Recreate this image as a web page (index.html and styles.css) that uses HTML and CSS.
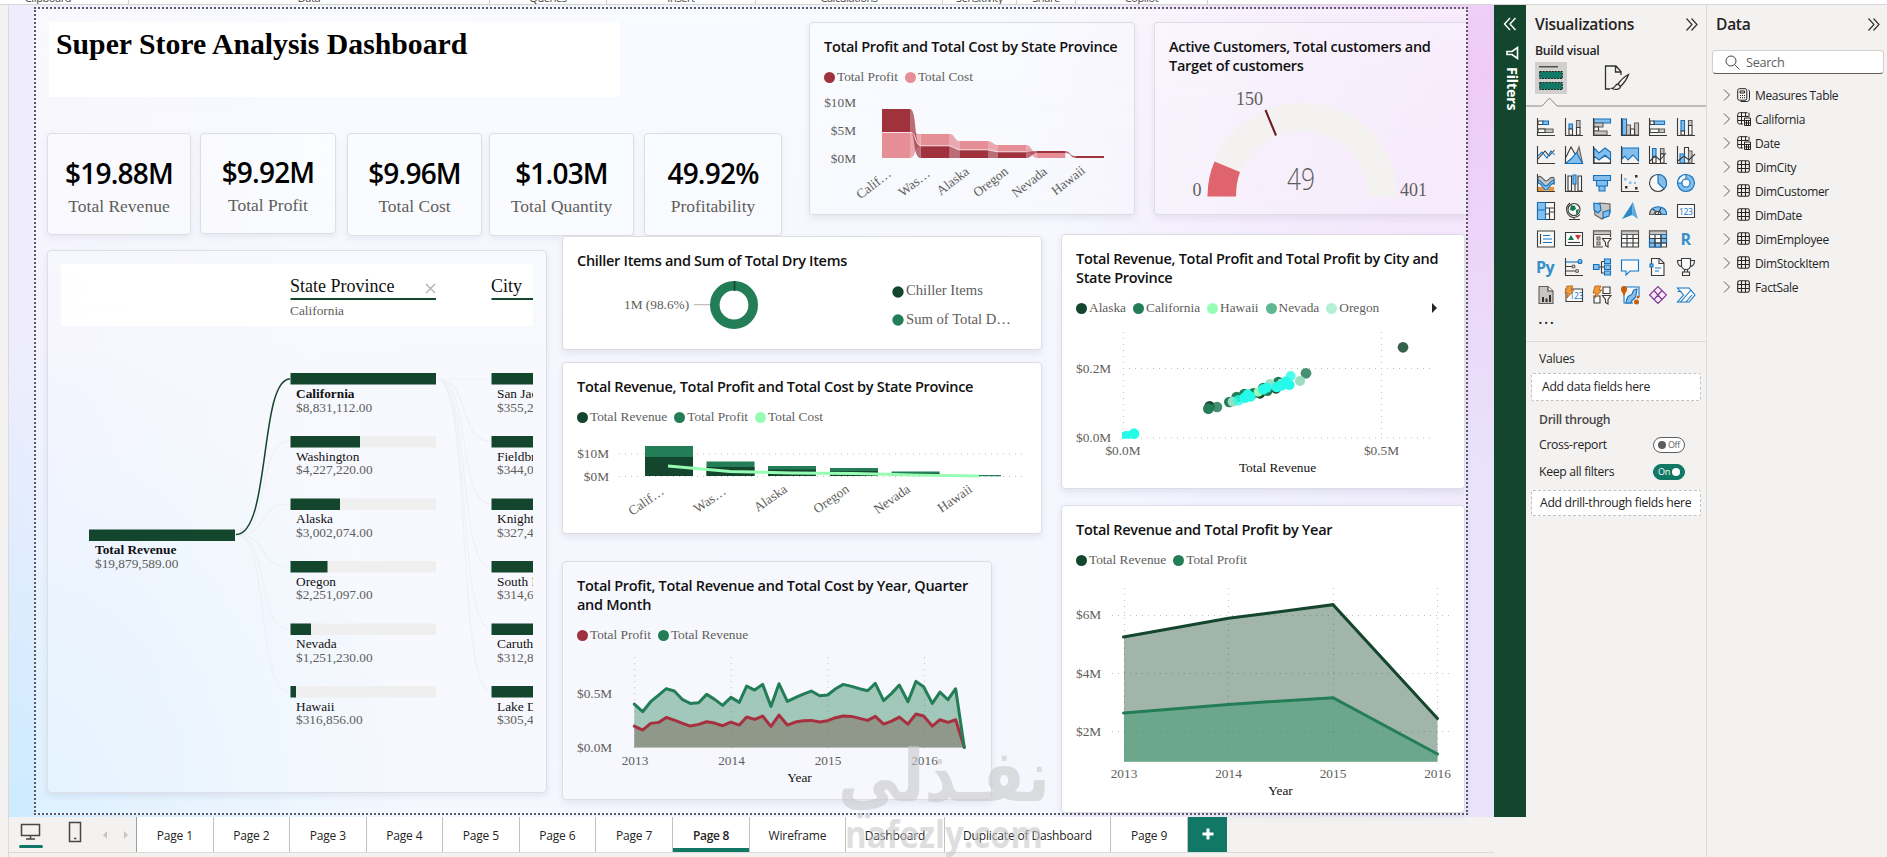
FILE: index.html
```html
<!DOCTYPE html>
<html lang="en">
<head>
    <meta charset="UTF-8">
    <meta name="viewport" content="width=device-width, initial-scale=1.0">
    <title>Super Store Analysis Dashboard</title>
    <link rel="stylesheet" href="styles.css">
</head>
<body>
    <div class="ribbon">
        <span class="g1">Clipboard</span><span class="g2">Data</span><span class="g3">Queries</span><span class="g4">Insert</span><span class="g5">Calculations</span><span class="g6">Sensitivity</span><span class="g7">Share</span><span class="g8">Copilot</span>
    </div>

    <div class="workspace">
        <div class="rail"></div>

        <main class="editor">
            <div class="report">
                <div class="canvas">
                    <div class="top-row">
                        <div class="intro">
                            <h1>Super Store Analysis Dashboard</h1>
                            <div class="kpi-row">
                                <div class="kpi k1"><b>$19.88M</b><span>Total Revenue</span></div>
                                <div class="kpi k2"><b>$9.92M</b><span>Total Profit</span></div>
                                <div class="kpi k3"><b>$9.96M</b><span>Total Cost</span></div>
                                <div class="kpi k4"><b>$1.03M</b><span>Total Quantity</span></div>
                                <div class="kpi k5"><b>49.92%</b><span>Profitability</span></div>
                            </div>
                        </div>

                        <section class="card ribbon-card">
                            <h2>Total Profit and Total Cost by State Province</h2>
                            <div class="legend"><span class="crimson">Total Profit</span><span class="pink">Total Cost</span></div>
                            <svg width="296" height="129" viewBox="824 85 296 129">
                                <g class="axis end">
                                    <text x="856" y="107">$10M</text><text x="856" y="135">$5M</text><text x="856" y="163">$0M</text>
                                </g>
                                <g fill="#e58e96">
                                    <path d="M882 132h28v26h-28zM920.7 134h29v12h-29zM959.4 141h28.6v9h-28.6zM998 145h28.5v7H998zM1036.8 153h28.5v5h-28.5z"/>
                                    <path opacity=".75" d="M910 132c6 0 5 2 10.7 2v12c-6 0-5 12-10.7 12zM949.7 134c5 0 5 7 9.7 7v9c-5 0-5-4-9.7-4zM988 141c5 0 5 4 10 4v7c-5 0-5-2-10-2zM1026.5 145c5 0 5 8 10.3 8v5c-5 0-5-6-10.3-6z"/>
                                </g>
                                <g fill="#a0323e">
                                    <path d="M882 109h28v23h-28zM920.7 146h29v12h-29zM959.4 150h28.6v8h-28.6zM998 152h28.5v6H998zM1036.8 151h28.5v2h-28.5zM1075.5 156h28.5v2h-28.5z"/>
                                    <path opacity=".7" d="M910 109c7 0 4 37 10.7 37v12c-8 0-5-26-10.7-26zM949.7 146c5 0 5 4 9.7 4v8h-9.7zM988 150c5 0 5 2 10 2v6h-10zM1026.5 152c4 0 5-1 10.3-1v2c-5 0-5 5-10.3 5zM1065.3 151c5 0 4 5 10.2 5v2c-5 0-4-5-10.2-5z"/>
                                </g>
                                <path d="M882 132.5h29c5 0 4 13.3 10 13.3h29l9 4h29l10 2h28" fill="none" stroke="#f6dde3"/>
                                <g class="axis end">
                                    <text transform="translate(892 175) rotate(-38)">Calif…</text>
                                    <text transform="translate(931 175) rotate(-38)">Was…</text>
                                    <text transform="translate(970 173) rotate(-38)">Alaska</text>
                                    <text transform="translate(1009 173) rotate(-38)">Oregon</text>
                                    <text transform="translate(1048 173) rotate(-38)">Nevada</text>
                                    <text transform="translate(1086 172) rotate(-38)">Hawaii</text>
                                </g>
                            </svg>
                        </section>

                        <section class="card gauge-card">
                            <h2>Active Customers, Total customers and<br>Target of customers</h2>
                            <svg width="282" height="140" viewBox="1169 74 282 140">
                                <path d="M1207.5 196.5a95 94 0 0 1 190 0h-30a65 65 0 0 0-131 0z" fill="#f3f2f0"/>
                                <path d="M1207.5 196.5q0-19 7-35l25.5 10.5q-4 11-4 24.5z" fill="#e0646e"/>
                                <path d="M1265.5 110l10.500 25.500" stroke="#6b1823" stroke-width="2"/>
                                <g class="gauge-num">
                                    <text x="1236" y="105">150</text><text x="1192.500" y="196">0</text><text x="1400" y="196">401</text>
                                </g>
                                <text class="gauge-value" x="1287" y="190" textLength="28" lengthAdjust="spacingAndGlyphs">49</text>
                            </svg>
                        </section>
                    </div>

                    <div class="bottom-row">
                        <section class="tree">
                            <svg width="498" height="541" viewBox="48 251 498 541">
                                <rect x="61" y="264" width="472" height="62" fill="#fff" opacity=".9"/>
                                <g class="tree-head">
                                    <text x="290" y="292">State Province</text><text x="491" y="292">City</text>
                                </g>
                                <path d="M290.500 299h145.500M491.500 299H533" stroke="#13462d" stroke-width="2"/>
                                <path d="M426 284l9 9m0-9l-9 9" stroke="#b3b0ad" stroke-width="1.300"/>
                                <text class="axis" x="290" y="315">California</text>

                                <g fill="none" stroke="#edf1f6" stroke-width="1.200">
                                    <path d="M236 535c35 0 19-94 54-94M236 535c35 0 19-31 54-31M236 535c35 0 19 32 54 32M236 535c35 0 19 94 54 94M236 535c35 0 19 157 54 157"/>
                                    <path d="M437 379h54M437 379c35 0 19 62 54 62M437 379c35 0 19 125 54 125M437 379c35 0 19 188 54 188M437 379c35 0 19 250 54 250M437 379c35 0 19 313 54 313"/>
                                </g>
                                <path d="M236 534.500c35 0 23-155.500 54-155.500" fill="none" stroke="#13462d" stroke-width="1.500"/>

                                <path d="M290.500 436h145.500v11.500H290.500zM290.500 498.500h145.500V510H290.500zM290.500 561h145.500v11.500H290.500zM290.500 623.500h145.500V635H290.500zM290.500 686h145.500v11.500H290.500z" fill="#efeff0"/>
                                <g fill="#13462d">
                                    <path d="M89 529.500h146V541H89z"/>
                                    <path d="M290.500 373h145.500v11.500H290.500zM290.500 436h69.500v11.500H290.500zM290.500 498.500h49.500V510H290.500zM290.500 561h37v11.500h-37zM290.500 623.500h20.500V635h-20.500zM290.500 686h5.500v11.500h-5.500z"/>
                                    <path d="M491.500 373H533v11.500h-41.500zM491.500 436H533v11.500h-41.500zM491.500 498.500H533V510h-41.500zM491.500 561H533v11.500h-41.500zM491.500 623.500H533V635h-41.500zM491.500 686H533v11.500h-41.500z"/>
                                </g>
                                <g class="node">
                                    <text x="95" y="554" class="bold">Total Revenue</text>
                                    <text x="296" y="398" class="bold">California</text>
                                    <text x="296" y="461">Washington</text>
                                    <text x="296" y="523">Alaska</text>
                                    <text x="296" y="586">Oregon</text>
                                    <text x="296" y="648">Nevada</text>
                                    <text x="296" y="711">Hawaii</text>
                                </g>
                                <g class="axis">
                                    <text x="95" y="567.500">$19,879,589.00</text>
                                    <text x="296" y="412">$8,831,112.00</text>
                                    <text x="296" y="474">$4,227,220.00</text>
                                    <text x="296" y="537">$3,002,074.00</text>
                                    <text x="296" y="599">$2,251,097.00</text>
                                    <text x="296" y="662">$1,251,230.00</text>
                                    <text x="296" y="724">$316,856.00</text>
                                </g>
                                <!-- city column is cut at the visual's edge -->
                                <svg x="491" y="360" width="42" height="400" viewBox="491 360 42 400" class="clip">
                                    <g class="node">
                                        <text x="497" y="398">San Jacinto</text><text x="497" y="461">Fieldbrook</text><text x="497" y="523">Knights Landing</text>
                                        <text x="497" y="586">South Laguna</text><text x="497" y="648">Caruthers</text><text x="497" y="711">Lake Davis</text>
                                    </g>
                                    <g class="axis">
                                        <text x="497" y="412">$355,220.00</text><text x="497" y="474">$344,012.00</text><text x="497" y="537">$327,410.00</text>
                                        <text x="497" y="599">$314,615.00</text><text x="497" y="662">$312,840.00</text><text x="497" y="724">$305,460.00</text>
                                    </g>
                                </svg>
                            </svg>
                        </section>

                        <div class="mid-col">
                            <section class="card solid donut-card">
                                <h2>Chiller Items and Sum of Total Dry Items</h2>
                                <svg width="450" height="80" viewBox="577 269 450 80">
                                    <text class="axis" x="624" y="309">1M (98.6%)</text>
                                    <path d="M694 304.700h16" stroke="#b3b0ad"/>
                                    <circle cx="734" cy="305" r="19.200" fill="none" stroke="#237d57" stroke-width="9.600"/>
                                    <path d="M734.500 281v10" stroke="#13462d" stroke-width="1.600"/>
                                    <circle cx="898" cy="292" r="5.700" fill="#13462d"/><circle cx="898" cy="320" r="5.700" fill="#237d57"/>
                                    <g class="axis big"><text x="906" y="295">Chiller Items</text><text x="906" y="324">Sum of Total D…</text></g>
                                </svg>
                            </section>

                            <section class="card solid combo-card">
                                <h2>Total Revenue, Total Profit and Total Cost by State Province</h2>
                                <div class="legend"><span class="forest">Total Revenue</span><span class="green">Total Profit</span><span class="mint">Total Cost</span></div>
                                <svg width="450" height="108" viewBox="577 425 450 108">
                                    <g class="axis end"><text x="609" y="458">$10M</text><text x="609" y="481">$0M</text></g>
                                    <path class="grid" d="M619 454h404M619 476.500h404"/>
                                    <path d="M645 446h48v30h-48zM706.500 461.500h48V476h-48zM768 466h48v10h-48zM830 468h48v8h-48zM891.500 471.500h48v4.500h-48zM953 475h48v1.200h-48z" fill="#237d57"/>
                                    <path d="M645 457h48v19h-48zM706.500 467h48v9h-48zM768 469.500h48v6.500h-48zM830 471h48v5h-48zM891.500 473h48v3h-48z" fill="#13462d"/>
                                    <path d="M668 466l62 5.500 62 1.500 62 .5 61 1.500 64 1" fill="none" stroke="#98fdb4" stroke-width="3"/>
                                    <g class="axis end">
                                        <text transform="translate(665 493) rotate(-35)">Calif…</text>
                                        <text transform="translate(727 493) rotate(-35)">Was…</text>
                                        <text transform="translate(788 491) rotate(-35)">Alaska</text>
                                        <text transform="translate(850 491) rotate(-35)">Oregon</text>
                                        <text transform="translate(911 491) rotate(-35)">Nevada</text>
                                        <text transform="translate(973 491) rotate(-35)">Hawaii</text>
                                    </g>
                                </svg>
                            </section>

                            <section class="card trend-card">
                                <h2>Total Profit, Total Revenue and Total Cost by Year, Quarter<br>and Month</h2>
                                <div class="legend"><span class="crimson">Total Profit</span><span class="green">Total Revenue</span></div>
                                <svg width="400" height="156" viewBox="577 643 400 156">
                                    <g class="axis"><text x="577" y="698">$0.5M</text><text x="577" y="752">$0.0M</text></g>
                                    <path class="grid" d="M634.700 657v91M731.300 657v91M828 657v91M924.500 657v91"/>
                                    <!-- monthly values, one step per month -->
                                    <svg x="634.300" y="656.700" width="330" height="90.700" viewBox="253 350 990 272">
                                        <path fill="#237d57" opacity=".4" d="M253 622V492L278 515 302 485 326 465 349 446 373 453 398 479 421 490 446 488 470 463 494 478 518 496 543 472 568 487 590 438 614 450 638 433 663 499 687 431 712 484 736 473 760 462 784 453 809 467 833 465 857 446 880 433 905 439 929 446 953 452 976 430 1001 482 1025 460 1048 435 1074 485 1098 424 1121 440 1147 490 1170 456 1194 479 1217 446 1243 622z"/>
                                        <path fill="#7b5f4f" opacity=".45" d="M253 622V558L278 570 302 550 326 547 349 532 373 540 398 550 421 558 446 553 470 545 494 549 518 557 543 546 568 555 590 531 614 538 638 528 663 559 687 525 712 555 736 546 760 542 784 541 809 546 833 542 857 533 880 528 905 529 929 535 953 541 976 529 1001 552 1025 543 1048 531 1074 552 1098 522 1121 528 1147 558 1170 539 1194 547 1217 539 1243 622z"/>
                                        <polyline class="series" stroke="#a6303f" points="253,558 278,570 302,550 326,547 349,532 373,540 398,550 421,558 446,553 470,545 494,549 518,557 543,546 568,555 590,531 614,538 638,528 663,559 687,525 712,555 736,546 760,542 784,541 809,546 833,542 857,533 880,528 905,529 929,535 953,541 976,529 1001,552 1025,543 1048,531 1074,552 1098,522 1121,528 1147,558 1170,539 1194,547 1217,539 1243,622"/>
                                        <polyline class="series" stroke="#237d57" points="253,492 278,515 302,485 326,465 349,446 373,453 398,479 421,490 446,488 470,463 494,478 518,496 543,472 568,487 590,438 614,450 638,433 663,499 687,431 712,484 736,473 760,462 784,453 809,467 833,465 857,446 880,433 905,439 929,446 953,452 976,430 1001,482 1025,460 1048,435 1074,485 1098,424 1121,440 1147,490 1170,456 1194,479 1217,446 1243,622"/>
                                    </svg>
                                    <g class="axis mid"><text x="635" y="765">2013</text><text x="731.500" y="765">2014</text><text x="828" y="765">2015</text><text x="924.500" y="765">2016</text></g>
                                    <text class="axis mid black" x="799.500" y="782">Year</text>
                                </svg>
                            </section>
                        </div>

                        <div class="right-col">
                            <section class="card solid scatter-card">
                                <h2>Total Revenue, Total Profit and Total Profit by City and<br>State Province</h2>
                                <div class="legend"><span class="forest">Alaska</span><span class="green">California</span><span class="mint">Hawaii</span><span class="teal">Nevada</span><span class="pale">Oregon</span><i class="more"></i></div>
                                <svg width="374" height="172" viewBox="1076 316 374 172">
                                    <path class="grid" d="M1123.500 332v106M1381.500 332v106M1123 368.500h308M1123 438h308"/>
                                    <g class="axis"><text x="1076" y="373">$0.2M</text><text x="1076" y="442">$0.0M</text></g>
                                    <svg x="1122" y="330" width="308" height="110" viewBox="216 330 924 330">
                                        <g fill="#13462d"><circle cx="1059" cy="382" r="16" opacity=".85"/><circle cx="479" cy="559" r="16"/><circle cx="630" cy="520" r="16"/><circle cx="678" cy="505" r="16"/></g>
                                        <g fill="#237d57"><circle cx="475" cy="566" r="16"/><circle cx="501" cy="561" r="16" opacity=".85"/><circle cx="538" cy="546" r="16"/><circle cx="560" cy="531" r="16"/><circle cx="583" cy="522" r="16"/><circle cx="610" cy="520" r="16"/><circle cx="685" cy="486" r="16"/><circle cx="768" cy="460" r="16" opacity=".85"/><circle cx="640" cy="504" r="16"/><circle cx="652" cy="512" r="16"/></g>
                                        <g fill="#9adfc0"><circle cx="548" cy="545" r="15"/><circle cx="660" cy="492" r="15"/><circle cx="750" cy="483" r="15"/><circle cx="694" cy="490" r="14"/></g>
                                        <g fill="#98fdb4"><circle cx="625" cy="516" r="14"/></g>
                                        <g fill="#25fbe8"><circle cx="565" cy="541" r="16" opacity=".8"/><circle cx="584" cy="533" r="16"/><circle cx="593" cy="523" r="15"/><circle cx="602" cy="530" r="15"/><circle cx="640" cy="508" r="16"/><circle cx="650" cy="503" r="15"/><circle cx="680" cy="501" r="16"/><circle cx="695" cy="496" r="16"/><circle cx="708" cy="485" r="16"/><circle cx="718" cy="494" r="16"/><circle cx="722" cy="468" r="15" opacity=".8"/><circle cx="252" cy="641" r="16"/><path d="M216 637q14-8 26 0v19h-26z"/></g>
                                    </svg>
                                    <g class="axis mid"><text x="1123" y="455">$0.0M</text><text x="1381.500" y="455">$0.5M</text></g>
                                    <text class="axis mid black" x="1277.500" y="472">Total Revenue</text>
                                </svg>
                            </section>

                            <section class="card solid area-card">
                                <h2>Total Revenue and Total Profit by Year</h2>
                                <div class="legend"><span class="forest">Total Revenue</span><span class="green">Total Profit</span></div>
                                <svg width="374" height="244" viewBox="1076 568 374 244">
                                    <path class="grid" d="M1112 615.500h338M1112 673.500h338M1112 731.500h338M1124.500 588v174M1228.500 588v174M1333.500 588v174M1437.500 588v174"/>
                                    <path d="M1124 761.700V637l104.500-18.700 104.500-13.600 104.500 113.700v43.300z" fill="#13462d" opacity=".4"/>
                                    <path d="M1124 761.700V713l104.500-8.600 104.500-6.700 104.500 56.300v7.700z" fill="#3a9a6c" opacity=".5"/>
                                    <path d="M1123.500 637l105-18.700 104.500-13.600 104.500 113.700" fill="none" stroke="#13462d" stroke-width="3" stroke-linecap="round"/>
                                    <path d="M1123.500 713l105-8.600 104.500-6.700 104.500 56.300" fill="none" stroke="#237d57" stroke-width="3" stroke-linecap="round"/>
                                    <g class="axis"><text x="1076" y="619">$6M</text><text x="1076" y="677.500">$4M</text><text x="1076" y="735.500">$2M</text></g>
                                    <g class="axis mid"><text x="1124" y="778">2013</text><text x="1228.500" y="778">2014</text><text x="1333" y="778">2015</text><text x="1437.500" y="778">2016</text></g>
                                    <text class="axis mid black" x="1280.500" y="795">Year</text>
                                </svg>
                            </section>
                        </div>
                    </div>
                </div>
            </div>

            <nav class="tabs">
                <div class="views">
                    <svg width="127" height="35" viewBox="0 0 127 35">
                        <g fill="none" stroke="#484644" stroke-width="1.500"><path d="M12.500 7.500h18v11h-18zM21.500 19v2.500M17 22h9M60.500 5.500h11v19h-11z"/></g>
                        <path d="M65 21.500h2.500" stroke="#484644" stroke-width="1.500"/>
                        <rect x="10" y="28" width="24" height="3" rx="1.500" fill="#117865"/>
                        <path d="M98 14v8l-4-4zM115 14v8l4-4z" fill="#c8c6c4"/>
                    </svg>
                </div>
                <a class="t-a">Page 1</a><a class="t-a">Page 2</a><a class="t-a">Page 3</a><a class="t-a">Page 4</a><a class="t-a">Page 5</a><a class="t-a">Page 6</a><a class="t-b">Page 7</a><a class="t-b active">Page 8</a><a class="t-c">Wireframe</a><a class="t-d">Dashboard</a><a class="t-e">Duplicate of Dashboard</a><a class="t-b">Page 9</a>
                <span class="add"><svg width="12" height="12" viewBox="0 0 12 12"><path d="M6 0.500v11M0.500 6h11" stroke="#fff" stroke-width="3"/></svg></span>
            </nav>
        </main>

        <aside class="filters">
            <svg width="14" height="14" viewBox="0 0 14 14"><path d="M7 1L1.500 7 7 13M12.500 1L7 7l5.500 6" fill="none" stroke="#fff" stroke-width="1.400"/></svg>
            <svg class="funnel" width="14" height="14" viewBox="0 0 14 14"><path d="M12.500 1.500v11L7 8.500H2v-3h5z" fill="none" stroke="#fff" stroke-width="1.600"/></svg>
            <span>Filters</span>
        </aside>

        <aside class="viz">
            <header><h3>Visualizations</h3><svg width="12" height="13" viewBox="0 0 12 13"><path d="M.5.5l5.500 6-5.500 6M5.500.5l5.500 6-5.500 6" fill="none" stroke="#323130" stroke-width="1.200"/></svg></header>
            <h4>Build visual</h4>
            <div class="modes">
                <span class="mode on"><svg width="24" height="25" viewBox="0 0 24 25"><path d="M0 .8h19" stroke="#323130" stroke-width="1.200"/><g fill="#117865" stroke="#201f1e" stroke-dasharray="2 1"><path d="M.7 5.500h22.600v7H.7zM.7 16.500h22.600v7H.7z"/></g></svg></span>
                <svg width="26" height="26" viewBox="0 0 26 26"><g fill="none" stroke="#323130" stroke-width="1.300"><path d="M6 24H1.500V1H12l5 5.500V10M11.500 1v6H17M24.500 9.500c-4 2-8 6-10.500 9.500l2.500 2.500c3-3 6.500-7.500 8-12zM14 19c-3 0-2.500 4-6 4.500 3 1.500 8 1.500 8.500-2"/></g></svg>
            </div>
            <svg class="notch" width="180" height="10" viewBox="0 0 180 10"><path d="M0 9h16l7.500-8L31 9h149" fill="none" stroke="#8a8886"/></svg>

            <div class="viz-grid">
                <svg viewBox="0 0 18 18"><path class="k" d="M.5 0v17.500H18"/><path class="gr" d="M1 11h15v3.500H1z"/><path class="w" d="M1 3h5v3.500H1zM1 11h7v3.500H1z"/><path class="bl" d="M6 3h5.500v3.500H6z"/></svg>
                <svg viewBox="0 0 18 18"><path class="k" d="M.5 0v17.500H18"/><path class="bl" d="M4 6h3.500v5H4z"/><path class="gr" d="M11.500 2.500H15v7h-3.500z"/><path class="w" d="M4 11h3.500v6H4zM11.500 9.500H15V17h-3.500z"/></svg>
                <svg viewBox="0 0 18 18"><path class="bl" d="M1 1h16.500v4H1z"/><path class="gr" d="M1 5h9v4H1z"/><path class="w" d="M1 9h4.500v4H1z"/><path class="gr" d="M1 13h13v4H1z"/><path class="k" d="M.5 0v17.500H18"/></svg>
                <svg viewBox="0 0 18 18"><path class="bl" d="M1.500 1h4v16h-4z"/><path class="gr" d="M5.500 7h4v10h-4zM13.500 5h4v12h-4z"/><path class="w" d="M9.500 11h4v6h-4z"/><path class="k" d="M.5 0v17.500H18"/></svg>
                <svg viewBox="0 0 18 18"><path class="k" d="M.5 0v17.500H18"/><path class="bl" d="M5 3h10.500v3.500H5z"/><path class="w" d="M1 3h4v3.500H1zM1 11h9v3.500H1z"/><path class="gr" d="M10 11h5.500v3.500H10z"/></svg>
                <svg viewBox="0 0 18 18"><path class="k" d="M.5 0v17.500H18"/><path class="bl" d="M4 2.500h3.500V13H4z"/><path class="gr" d="M11.500 2.500H15v5h-3.500z"/><path class="w" d="M4 13h3.500v4H4zM11.500 7.500H15V17h-3.500z"/></svg>

                <svg viewBox="0 0 18 18"><path class="k" d="M.5 0v17.500H18M1 13l7-8 4 5 5.500-6"/><path class="b" d="M1 10l4-4 5 6 4-7 3.500 4"/></svg>
                <svg viewBox="0 0 18 18"><path class="gr" d="M8 17l6-16 3.500 16z"/><path class="w" d="M.5 12L6 1l9 16H.5z"/><path class="bl" d="M.5 17.500l6-5 5-6 6 11z"/><path class="k" d="M.5 0v17.500"/></svg>
                <svg viewBox="0 0 18 18"><path class="w" d="M1 10l5 3 6-3 5.500 3v4H1z"/><path class="bl" d="M1 2l5 5 6-5 5.500 4v8L12 9l-6 5-5-4z"/><path class="k" d="M.5 0v17.500H18"/></svg>
                <svg viewBox="0 0 18 18"><path class="bl" d="M1 2h16.500v13L12 9l-5 5-3-4-3 3z"/><path class="k" d="M.5 0v17.500H18"/></svg>
                <svg viewBox="0 0 18 18"><path class="bl" d="M3.500 2.500h3.500v8H3.500z"/><path class="gr" d="M11.500 2.500H15v5h-3.500z"/><path class="w" d="M3.500 11H7v6H3.500zM11.500 8H15v9h-3.500z"/><path class="k" d="M.5 0v17.500H18M1 15l5-5 5 4 6-7"/></svg>
                <svg viewBox="0 0 18 18"><path class="w" d="M7.500 1.500h4V17h-4z"/><path class="bl" d="M3 8h4.500v9H3z"/><path class="gr" d="M11.500 5H15v12h-3.500z"/><path class="k" d="M.5 0v17.500H18M1 15l6-5 5 4 6-6"/></svg>

                <svg viewBox="0 0 18 18"><path class="gr" d="M1 3c4-3 5 4 8 4s4-6 8-3v6c-4-2-4 3-8 3s-4-6-8-4z"/><path class="bl" d="M1 6c4 0 5 6 8 6s4-6 8-6v3c-4 0-5 7-8 7s-4-7-8-7z"/><path class="or" d="M1 13h4l3 4H1zM17 13h-4l-3 4h7z"/><path class="k" d="M.5 0v17.500H18"/></svg>
                <svg viewBox="0 0 18 18"><path class="w" d="M3 2h3.500v15H3zM13 2h3.500v15H13z"/><path class="bl" d="M8 1h3v9H8z"/><path class="k" d="M.5 0v17.500H18M10 10v7"/></svg>
                <svg viewBox="0 0 18 18"><path class="bl" d="M.5 1.500h17v5H.5zM3.500 6.500h11v5.500h-11zM6 12h6v5H6z"/></svg>
                <svg viewBox="0 0 18 18"><path class="k" d="M.5 0v17.500H18"/><path fill="#323130" d="M14 1h2.500v2.500H14zM4 12h2.500v2.500H4zM14 13h2.500v2.500H14z"/><path fill="#83beec" d="M3 4h2.500v2.500H3zM8 7.500h2.500V10H8zM13 8h2v2h-2z"/></svg>
                <svg viewBox="0 0 18 18"><circle class="w" cx="9" cy="9" r="8.500"/><path class="bl" d="M9 .5a8.500 8.500 0 0 1 6 14.500L9 9z"/></svg>
                <svg viewBox="0 0 18 18"><circle class="bl" cx="9" cy="9" r="8.500"/><path class="w b" d="M9 .5V5a4 4 0 0 0-4 4H.5A8.500 8.500 0 0 1 9 .5z"/><circle class="w b" cx="9" cy="9" r="4"/></svg>

                <svg viewBox="0 0 18 18"><path class="w" d="M.5.5h17v17H.5z"/><path class="bl" d="M.5.5h8v17h-8zM.5 8h8"/><path class="k" d="M8.500 6h9M12.500 6v11.500M8.500 12h4M12.500 10h5"/></svg>
                <svg viewBox="0 0 18 18"><circle class="w" cx="9" cy="7.500" r="6"/><path fill="#16794c" d="M6 3l4 1 1 3-3 2-3-1zM11 8l3-1-1 4-2 1z"/><path class="k" d="M5 1a8 8 0 0 0 4 14.500M9 15.500a8 8 0 0 0 6-3M9 15.500v2M4 17.500h11"/></svg>
                <svg viewBox="0 0 18 18"><path class="gr" d="M1 2l6-1 10 1v9l-5 4-3 2-7-4z"/><path class="bl" d="M1 1l6 1 1 6-3 3-4-3zM10 10l7-2-1 6-6 2z"/></svg>
                <svg viewBox="0 0 18 18"><path fill="#2b88c9" d="M12 0L1 17l10-4z"/><path fill="#5fa9dc" d="M12 0l5 17-6-4z"/></svg>
                <svg viewBox="0 0 18 18"><path class="gr" d="M.5 12.500a8.500 7.500 0 0 1 3-6l3 3-2 3z"/><path class="bl" d="M3.500 6.500a8.500 7 0 0 1 14 6h-4l-7-3.500z"/><path class="w" d="M6 12.500a3 3 0 0 1 6 0z"/><path class="k" d="M9 12l3-6"/></svg>
                <svg viewBox="0 0 18 18"><path class="w" d="M.5 2.500h17v13H.5z"/><text class="n" x="2" y="12.500">123</text></svg>

                <svg viewBox="0 0 18 18"><path class="w" d="M.5 1h17v16H.5z"/><path class="b" d="M6 5.500h7M6 9h9M6 12.500h9" stroke-width="2"/><path class="k" d="M3.500 4v10"/></svg>
                <svg viewBox="0 0 18 18"><path class="w" d="M.5 2.500h17v13H.5z"/><path fill="#16794c" d="M3 10l3-5 3 5z"/><path fill="#d13438" d="M10 5h6l-3 5z"/><path class="k" d="M3 12.500h12"/></svg>
                <svg viewBox="0 0 18 18"><path class="k" d="M10 17H.5V1h17v6"/><path class="gr" d="M.5 1h17v3.500H.5zM4 7h3v3H4zM4 12h3v3H4z"/><path class="w" d="M9.500 8.500h8.500l-3 4V17l-2.500-1.500v-3z"/></svg>
                <svg viewBox="0 0 18 18"><path class="w" d="M.5 1h17v16H.5z"/><path class="gr" d="M.5 1h17v3.500H.5z"/><path class="k" d="M6 4.500V17M12 4.500V17M.5 8.500h17M.5 13h17"/></svg>
                <svg viewBox="0 0 18 18"><path class="w" d="M.5 1h17v16H.5z"/><path class="gr" d="M.5 1h17v3.500H.5z"/><path class="bl" d="M.5 8.500H6V17H.5zM6 13h6v4H6zM12 4.500h5.500V13H12z"/><path class="k" d="M6 4.500V17M12 4.500V17M.5 8.500h17M.5 13h17"/></svg>
                <svg viewBox="0 0 18 18"><text class="rp" x="3.500" y="15">R</text></svg>

                <svg viewBox="0 0 18 18"><text class="rp" x="-1" y="14.500">Py</text></svg>
                <svg viewBox="0 0 18 18"><path class="k" d="M.5 0v17.500H18M1 8.500h6M1 13h9"/><path class="b" d="M1 4h12"/><circle class="bl" cx="15" cy="3.500" r="2"/><circle class="gr" cx="8.500" cy="8.500" r="1.500"/><circle class="gr" cx="12" cy="13" r="1.500"/></svg>
                <svg viewBox="0 0 18 18"><path class="k" d="M6 9h5M8.500 3.500h3M8.500 3.500v11.500h3"/><path class="bl" d="M.5 6.500H6v5H.5zM11.500 1h6v4.500h-6zM11.500 7h6v4.500h-6zM11.500 13h6v4h-6z"/></svg>
                <svg viewBox="0 0 18 18"><path class="w b" d="M.5 2h17v11H9l-4 4v-4H.5z"/></svg>
                <svg viewBox="0 0 18 18"><path class="w" d="M2.500 .5h8L15 5v12.500H2.500z"/><path class="k" d="M10 1v4.500h5"/><path class="bl" d="M1 6h3v3H1z"/><path class="b" d="M6 10h6M6 13h4"/></svg>
                <svg viewBox="0 0 18 18"><path class="w" d="M4.500.5h9V7c0 3-2 4.500-4.500 4.500S4.500 10 4.500 7z"/><path class="k" d="M4.500 2.500h-4c0 4 2 6 4.500 6M13.500 2.500h4c0 4-2 6-4.500 6M7.500 11.500V14h3v-2.500M5.500 14h7v3.500h-7z"/></svg>

                <svg viewBox="0 0 18 18"><path class="gr" d="M2 .5h9L16 5v12.500H2z"/><path class="w" d="M11 .5V5h5"/><path fill="#323130" d="M5 11h2v5H5zM8.500 12.500h2V16h-2zM12 9h2v7h-2z"/></svg>
                <svg viewBox="0 0 18 18"><path class="w" d="M1 3h16.500v12.500H1z"/><text class="n" x="4.500" y="13">123</text><path class="bolt" d="M2 0h6L6 4h3l-7 8 1-5H0z"/></svg>
                <svg viewBox="0 0 18 18"><path class="w" d="M10 1h7v6.500h-7zM1 10h6v7H1z"/><path class="w" d="M9.500 9.500h8.500l-3 4V18l-2.500-1.500v-3z"/><path class="bolt" d="M2 0h6L6 4h3l-7 8 1-5H0z"/></svg>
                <svg viewBox="0 0 18 18"><path class="w b" d="M2 1h16v10M3 8v9h9"/><path class="bl" d="M16 3c-6 0-3 5-6 6s-4 2-5 8h5c0-4 5-3 5-8z"/><circle fill="#c75f0b" cx="3" cy="3" r="3"/><path fill="#c75f0b" d="M0 4l3 6 3-6z"/><circle fill="#c75f0b" cx="15.500" cy="16" r="2.500"/><circle fill="#c75f0b" cx="17" cy="11" r="1.500"/></svg>
                <svg viewBox="0 0 18 18"><path fill="#f7edf8" stroke="#8a3c96" stroke-width="1.200" d="M5 4.500L9 .6l4 3.900 4.400 4.500L13 13.500l-4 3.900-4-3.900L.6 9zM5 4.500l8 9M13 4.500l-8 9M5 4.500L9 9"/></svg>
                <svg viewBox="0 0 18 18"><path class="w b" d="M.5 2H12l6 7-6 7H.5l6-7z"/><path class="b" d="M3.500 16L14 4M9 16l6-7M.5 5.500h4"/></svg>
            </div>
            <div class="dots">···</div>

            <div class="wells">
                <label>Values</label>
                <div class="well">Add data fields here</div>
                <label class="strong">Drill through</label>
                <div class="switch-row">Cross-report <span class="toggle"><i></i>Off</span></div>
                <div class="switch-row second">Keep all filters <span class="toggle on">On<i></i></span></div>
                <div class="well drill">Add drill-through fields here</div>
            </div>
        </aside>

        <aside class="data">
            <header><h3>Data</h3><svg width="12" height="13" viewBox="0 0 12 13"><path d="M.5.5l5.500 6-5.500 6M5.500.5l5.500 6-5.500 6" fill="none" stroke="#323130" stroke-width="1.200"/></svg></header>
            <div class="search"><svg width="15" height="15" viewBox="0 0 15 15"><circle cx="6" cy="6" r="5" fill="none" stroke="#484644"/><path d="M9.500 9.500l5 5" stroke="#484644"/></svg>Search</div>
            <ul>
                <li><svg class="chev"><use href="#chev"/></svg><svg class="ico"><use href="#calc"/></svg>Measures Table</li>
                <li><svg class="chev"><use href="#chev"/></svg><svg class="ico"><use href="#calctable"/></svg>California</li>
                <li><svg class="chev"><use href="#chev"/></svg><svg class="ico"><use href="#calctable"/></svg>Date</li>
                <li><svg class="chev"><use href="#chev"/></svg><svg class="ico"><use href="#table"/></svg>DimCity</li>
                <li><svg class="chev"><use href="#chev"/></svg><svg class="ico"><use href="#table"/></svg>DimCustomer</li>
                <li><svg class="chev"><use href="#chev"/></svg><svg class="ico"><use href="#table"/></svg>DimDate</li>
                <li><svg class="chev"><use href="#chev"/></svg><svg class="ico"><use href="#table"/></svg>DimEmployee</li>
                <li><svg class="chev"><use href="#chev"/></svg><svg class="ico"><use href="#table"/></svg>DimStockItem</li>
                <li><svg class="chev"><use href="#chev"/></svg><svg class="ico"><use href="#table"/></svg>FactSale</li>
            </ul>
        </aside>
    </div>

    <svg class="watermark" width="220" height="115" viewBox="834 742 220 115">
        <text class="wm-ar" x="838" y="801" textLength="212" lengthAdjust="spacingAndGlyphs">نفـذلي</text>
        <text class="wm-en" x="845" y="848" textLength="198" lengthAdjust="spacingAndGlyphs">nafezly.com</text>
    </svg>

    <svg class="defs" width="0" height="0">
        <symbol id="chev" viewBox="0 0 8 12"><path d="M1 .5l5.500 5.500L1 11.500" fill="none" stroke="#605e5c"/></symbol>
        <symbol id="table" viewBox="0 0 14 14"><path d="M2.500.7h8q1.800 0 1.800 1.800v8q0 1.800-1.800 1.800h-8Q.7 12.300.7 10.500v-8Q.7.700 2.500.700zM4.500.7v11.600M8.500.7v11.600M.7 4.500h11.600M.7 8.500h11.600" fill="none" stroke="#252423" stroke-width="1.100"/></symbol>
        <symbol id="calctable" viewBox="0 0 14 14"><path d="M6 12H2.500Q.7 12 .7 10.200v-7.700Q.7.700 2.500.700h8M4.500.7V12M8.500.7v4M.7 4.500h11M.7 8.500H7M12 .7v4" fill="none" stroke="#252423"/><path d="M7.500 6h6v7.500h-6zM7.500 8.500h6M9.500 8.500v5M11.500 8.500v5M7.500 11h6" fill="none" stroke="#252423"/></symbol>
        <symbol id="calc" viewBox="0 0 14 14"><path d="M2.500.7H8q1.800 0 1.800 1.800v8.200q0 1.500-1.800 1.500H2.500Q.7 12.200.7 10.700V2.500Q.7.700 2.500.700zM3 3h4.500v2H3zM3 7.500h1M5 7.500h1M7 7.500h1M3 9.700h1M5 9.700h1M7 9.700h1M11.500 2c1 0 1 1 1 2v6.500c0 2-1 3-3 3H3.500" fill="none" stroke="#252423"/></symbol>
    </svg>
</body>
</html>
```
FILE: styles.css
```css
* { box-sizing: border-box; }
body { margin: 0; height: 857px; overflow: hidden; background: #f3f2f1; font-family: "Open Sans", "Noto Sans", sans-serif; color: #252423; }
h1, h2, h3, h4, ul { margin: 0; padding: 0; }
svg { display: block; flex: none; }

.ribbon { height: 5px; background: #fff; border-bottom: 1px solid #d8d6d4; overflow: hidden; display: flex; }
.ribbon span { height: 4px; line-height: 12px; font-size: 11px; letter-spacing: -.4px; border-right: 1px solid #d2d0ce; display: flex; justify-content: center; align-items: flex-end; color: #484644; }
.g1 { width: 129px; padding-right: 32px; }
.g2 { width: 361px; }
.g3 { width: 117px; }
.g4 { width: 149px; }
.g5 { width: 187px; }
.g6 { width: 74px; }
.g7 { width: 59px; }
.g8 { width: 132px; }

.workspace { display: flex; height: 852px; }
.rail { width: 9px; border-right: 1px solid #dddbd9; }
.editor { width: 1485px; }
.report { height: 812px; padding: 2px 0 0 25px; background:
    radial-gradient(ellipse 480px 400px at 100% 8%, #efcbf6, rgba(240, 205, 248, 0)),
    radial-gradient(ellipse 420px 480px at 0 100%, #cdebff, rgba(215, 238, 255, 0)),
    linear-gradient(90deg, #efedfd, #f1f5fe 20%, #eff3fe 70%, #e8e2fb); }
.canvas { width: 1434px; height: 808px; border: 2px dotted #5a5869; background: linear-gradient(rgba(255, 255, 255, .6), rgba(255, 255, 255, .3) 45%); }

.top-row { display: flex; height: 225px; padding-top: 13px; }
.intro { width: 746px; }
h1 { width: 571px; height: 75px; margin-left: 13px; padding: 5px 0 0 7px; background: #fff; font: bold 29.75px/34px "Liberation Serif", serif; color: #000; }
.kpi-row { display: flex; margin: 36px 0 0 11px; }
.kpi { height: 102px; padding-top: 20px; border: 1px solid #dedee6; border-radius: 4px; background: rgba(255, 255, 255, .35); box-shadow: 0 3px 6px rgba(100, 100, 140, .1); text-align: center; white-space: nowrap; }
.kpi b { display: block; margin-bottom: 3px; font-size: 28px; line-height: 39px; font-weight: 600; letter-spacing: -.8px; color: #000; }
.kpi span { display: block; font: 17.5px/20px "Liberation Serif", serif; color: #605e5c; }
.k1 { width: 144px; }
.k2 { width: 136px; height: 101px; margin-left: 9px; padding-top: 19px; }
.k3 { width: 135px; height: 103px; margin-left: 11px; }
.k4 { width: 145px; height: 103px; margin-left: 7px; }
.k5 { width: 138px; height: 103px; margin-left: 10px; }

.card { padding: 14px 0 0 14px; border: 1px solid #dedde6; border-radius: 4px; background: rgba(255, 255, 255, .2); box-shadow: 0 3px 7px rgba(100, 100, 140, .12); }
.card.solid { background: #fff; }
.card svg { margin-top: -1px; overflow: visible; }
.card svg svg { overflow: visible; }
h2 { font-size: 14.5px; line-height: 19px; font-weight: 600; letter-spacing: -.3px; color: #111; white-space: nowrap; }
.legend { display: flex; height: 16px; margin-top: 13px; margin-bottom: 1px; font: 13.33px/16px "Liberation Serif", serif; color: #605e5c; }
.legend span { display: flex; align-items: center; margin-right: 7px; white-space: nowrap; }
.legend span::before { content: ""; width: 11px; height: 11px; margin-right: 2px; border-radius: 50%; background: #13462d; }
.legend .crimson::before { background: #a0323e; }
.legend .pink::before { background: #e58e96; }
.legend .green::before { background: #237d57; }
.legend .mint::before { background: #98fdb4; }
.legend .teal::before { background: #5fb892; }
.legend .pale::before { background: #b5f0d6; }
.more { margin: 3px 0 0 auto; border: 5.5px solid transparent; border-left-color: #252423; border-right: 0; height: 0; }

.ribbon-card { width: 326px; height: 193px; margin-left: 27px; }
.gauge-card { width: 312px; height: 193px; margin-left: 19px; border-right: 0; border-radius: 4px 0 0 4px; }

.bottom-row { display: flex; align-items: flex-start; }
.tree { width: 500px; height: 543px; margin: 16px 0 0 11px; border: 1px solid #dedee6; border-radius: 4px; background: rgba(255, 255, 255, .2); box-shadow: 0 3px 7px rgba(100, 100, 140, .12); }
.mid-col { width: 480px; margin: 2px 0 0 15px; }
.donut-card { height: 114px; }
.combo-card { height: 172px; margin-top: 12px; }
.trend-card { width: 430px; height: 239px; margin-top: 27px; }
.right-col { width: 404px; margin-left: 19px; }
.scatter-card { height: 255px; }
.scatter-card .legend { padding-right: 27px; }
.area-card { height: 308px; margin-top: 16px; }

.axis, .node, .tree-head, .gauge-num { font-family: "Liberation Serif", serif; font-size: 13.33px; fill: #605e5c; }
.axis.big { font-size: 14.67px; }
.end { text-anchor: end; }
.mid { text-anchor: middle; }
.black { fill: #111; }
.grid { fill: none; stroke: #c3c1bf; stroke-dasharray: 1 5; }
.series { fill: none; stroke-width: 9; stroke-linejoin: round; stroke-linecap: round; }
.gauge-num { font-size: 18px; }
.gauge-value { font-size: 31px; font-weight: 300; fill: #605e5c; }
.tree-head { font-size: 18px; fill: #111; }
.node { fill: #111; }
.bold { font-weight: bold; }
.clip { overflow: hidden; }

.tabs { display: flex; height: 35px; box-shadow: 0 1px 0 #dddbd9; font-size: 12px; letter-spacing: -.15px; }
.views { width: 128px; border-right: 1px solid #a19f9d; }
.tabs a { display: flex; justify-content: center; align-items: center; padding-top: 2px; background: #fff; border-right: 1px solid #c3c1bf; white-space: nowrap; }
.t-a { width: 76.5px; }
.t-b { width: 77px; }
.t-c { width: 96px; }
.t-d { width: 99px; }
.t-e { width: 166px; }
.tabs .active { font-weight: 600; letter-spacing: -.3px; box-shadow: inset 0 -4px #117865; }
.add { width: 39px; height: 35px; background: #117865; display: flex; justify-content: center; padding-top: 11px; }

.filters { width: 32px; height: 812px; padding: 12px 0 0 9px; background: #13462d; color: #fff; }
.filters .funnel { margin: 15px 0 7px 2px; }
.filters span { display: block; writing-mode: vertical-rl; font-size: 14.3px; line-height: 18px; font-weight: 700; letter-spacing: -.2px; }

.viz { width: 181px; border-right: 1px solid #dddbd9; }
.viz header, .data header { display: flex; align-items: center; justify-content: space-between; height: 38px; padding: 0 8px 0 9px; }
.data header { padding-right: 7px; }
h3 { font-size: 15.6px; font-weight: 600; letter-spacing: -.3px; }
h4 { padding-left: 9px; font-size: 12.3px; line-height: 15px; font-weight: 600; letter-spacing: -.3px; }
.modes { display: flex; align-items: center; gap: 37px; margin: 4px 0 0 9px; }
.mode { width: 32px; height: 32px; padding: 4px; background: #d2d0ce; }
.notch { margin-top: 3px; }
.viz-grid { display: grid; grid-template-columns: repeat(6, 18px); gap: 10px; padding: 11px 0 0 11px; }
.viz-grid svg { width: 18px; height: 18px; overflow: visible; }
.k { fill: none; stroke: #3b3a39; stroke-width: 1.1; }
.b { fill: none; stroke: #1174c4; stroke-width: 1.1; }
.bl { fill: #83beec; stroke: #1570ba; stroke-width: 1.1; }
.gr { fill: #c8c6c4; stroke: #605e5c; stroke-width: 1.1; }
.or { fill: #e8923a; }
.w { fill: #fafafa; stroke: #3b3a39; stroke-width: 1.1; }
.w.b { stroke: #1174c4; }
.n { font-size: 8.5px; letter-spacing: -.3px; fill: #1174c4; }
.rp { font-size: 16px; font-weight: 700; letter-spacing: -.6px; fill: #358fc9; }
.bolt { fill: #ee9b3b; stroke: #b8580a; stroke-width: .8; }
.dots { padding: 9px 0 0 12px; font-size: 18px; line-height: 18px; height: 38px; letter-spacing: 1px; border-bottom: 1px solid #dddbd9; }

.wells { padding: 8px 5px 0 5px; font-size: 12.2px; line-height: 18px; letter-spacing: -.3px; }
.wells label { display: block; padding-left: 8px; }
.wells .strong { font-weight: 600; color: #484644; margin-top: 10px; }
.well { display: flex; align-items: center; width: 170px; height: 28px; margin-top: 5px; padding-left: 10px; background: #fff; border: 1px dashed #c3c1bf; border-radius: 2px; white-space: nowrap; }
.switch-row { display: flex; justify-content: space-between; height: 18px; align-items: center; padding: 0 16px 0 8px; margin-top: 7px; }
.switch-row.second { margin-top: 9px; }
.toggle { display: flex; align-items: center; justify-content: center; gap: 2px; width: 32px; height: 16px; border: 1px solid #605e5c; border-radius: 8px; background: #fff; font-size: 9px; color: #605e5c; }
.toggle i { width: 8px; height: 8px; border-radius: 50%; background: #605e5c; }
.toggle.on { background: #117865; border-color: #117865; color: #fff; }
.toggle.on i { background: #fff; }
.well.drill { height: 26px; margin-top: 9px; padding-left: 8px; }

.search { display: flex; align-items: center; gap: 6px; width: 172px; height: 24px; margin: 7px 0 0 5px; padding-left: 12px; background: #fff; border: 1px solid #d2d0ce; border-bottom-color: #605e5c; border-radius: 4px; font-size: 12.7px; letter-spacing: -.3px; color: #605e5c; }
.data { width: 180px; }
.data ul { list-style: none; padding-top: 9px; }
.data li { display: flex; align-items: center; height: 24px; padding-left: 16px; font-size: 12px; letter-spacing: -.35px; }
.chev { width: 8px; height: 12px; margin-right: 6px; }
.ico { width: 14px; height: 14px; margin-right: 4px; }

.watermark { position: absolute; left: 834px; top: 742px; opacity: .6; }
.wm-ar { font: bold 72px "DejaVu Sans", sans-serif; fill: #c9c9cb; }
.wm-en { font: 700 38px "Open Sans", sans-serif; fill: #c9c9cb; }
.defs { position: absolute; }
```
